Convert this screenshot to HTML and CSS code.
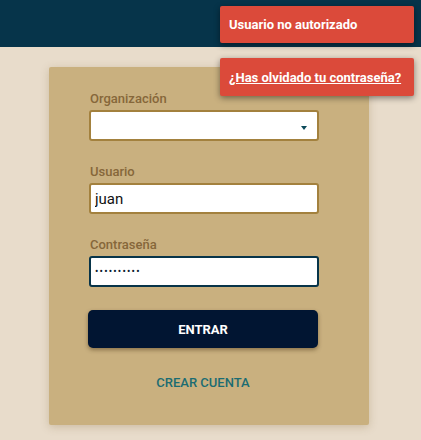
FILE: index.html
```html
<!DOCTYPE html>
<html lang="es">
<head>
<meta charset="utf-8">
<title>Login</title>
<link rel="stylesheet" href="styles.css">
</head>
<body>
<header class="topbar"></header>
<main class="page">
  <form class="card">
    <div class="field">
      <label class="label">Organización</label>
      <div class="select">
        <span class="caret"></span>
      </div>
    </div>
    <div class="field">
      <label class="label">Usuario</label>
      <input class="input" type="text" value="juan">
    </div>
    <div class="field">
      <label class="label">Contraseña</label>
      <input class="input input-focus" type="password" value="1234567890">
    </div>
    <button class="btn" type="button">ENTRAR</button>
    <a class="link" href="#">CREAR CUENTA</a>
  </form>
</main>
<div class="toasts">
  <div class="toast">Usuario no autorizado</div>
  <div class="toast"><a class="toast-link" href="#">¿Has olvidado tu contraseña?</a></div>
</div>
</body>
</html>
```
FILE: styles.css
```css
* { box-sizing: border-box; }
html, body { margin: 0; padding: 0; }
body {
  background: #e8dccb;
  font-family: Roboto, "Liberation Sans", Arial, sans-serif;
  width: 421px;
  height: 440px;
  overflow: hidden;
}
.topbar {
  height: 47px;
  background: #06344a;
}
.page {
  padding: 20px 0 0 49px;
}
.card {
  width: 320px;
  height: 358px;
  background: #c9b07f;
  border-radius: 2px;
  box-shadow: 0 2px 8px rgba(120, 90, 40, 0.25);
  padding: 24px 50px 0 40px;
  display: flex;
  flex-direction: column;
}
.field {
  display: flex;
  flex-direction: column;
  margin-bottom: 23px;
}
.field:last-of-type { margin-bottom: 23px; }
.label {
  font-size: 13px;
  font-weight: 500;
  line-height: 16px;
  color: #86673a;
  margin: 0 0 3px 1px;
}
.select, .input {
  width: 230px;
  height: 31px;
  flex: none;
  background: #fff;
  border: 2px solid #a3813e;
  border-radius: 3px;
}
.select {
  position: relative;
}
.caret {
  position: absolute;
  right: 10px;
  top: 14px;
  width: 0;
  height: 0;
  border-left: 3.5px solid transparent;
  border-right: 3.5px solid transparent;
  border-top: 4px solid #0b4a5a;
}
.input {
  font-family: Roboto, "Liberation Sans", Arial, sans-serif;
  font-size: 15px;
  color: #111;
  padding: 0 4px;
  outline: none;
}
.input-focus {
  border-color: #073449;
  font-size: 10px;
  letter-spacing: 1.2px;
  color: #0a1a30;
}
.btn {
  width: 230px;
  height: 38px;
  flex: none;
  margin-left: -1px;
  background: #011532;
  color: #fff;
  border: none;
  border-radius: 5px;
  font-family: Roboto, "Liberation Sans", Arial, sans-serif;
  font-weight: 700;
  font-size: 13px;
  box-shadow: 0 2px 4px rgba(60, 40, 10, 0.45);
}
.link {
  align-self: center;
  margin-top: 27px;
  margin-left: -2px;
  font-size: 13px;
  font-weight: 500;
  line-height: 16px;
  color: #1b6c72;
  text-decoration: none;
}
.toasts {
  position: absolute;
  top: 6px;
  right: 7px;
  display: flex;
  flex-direction: column;
  gap: 15px;
}
.toast {
  width: 194px;
  height: 37px;
  background: #db4a3a;
  border-radius: 2px;
  color: #fff;
  font-size: 13px;
  font-weight: 700;
  display: flex;
  align-items: center;
  padding-left: 9px;
  box-shadow: 0 2px 6px rgba(0, 0, 0, 0.45);
}
.toast + .toast { height: 38px; }
.toast-link {
  color: #fff;
  text-decoration: underline;
}
```
